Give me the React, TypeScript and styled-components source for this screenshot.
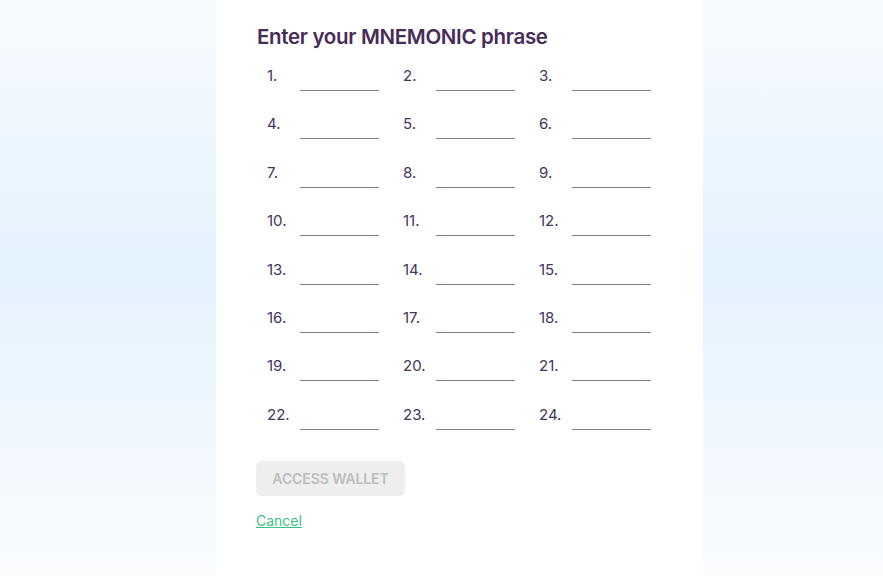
import React from 'react'
import styled, { createGlobalStyle } from 'styled-components'

const GlobalStyle = createGlobalStyle`
  html, body {
    margin: 0;
    padding: 0;
    height: 100%;
  }
  body {
    font-family: Inter, "Noto Sans", sans-serif;
  }
  #root {
    height: 100%;
  }
`

const StyledPage = styled('div')`
  min-height: 576px;
  display: flex;
  justify-content: center;
  background: linear-gradient(180deg, #f7fbfe 0%, #e4f2fe 47%, #fafcfe 100%);
`

const StyledCard = styled('section')`
  width: 487px;
  box-sizing: border-box;
  margin-left: 36px;
  background-color: #ffffff;
  padding: 25px 40px 0 40px;
`

const StyledHeading = styled('h2')`
  margin: 0 0 11px 1px;
  font-size: 20.5px;
  line-height: 24px;
  font-weight: 600;
  letter-spacing: -0.32px;
  color: #472c57;
`

const StyledGrid = styled('div')`
  margin-left: 11px;
  display: grid;
  grid-template-columns: repeat(3, 136px);
  row-gap: 17.4px;
`

const StyledItem = styled('label')`
  display: flex;
  align-items: center;
`

const StyledNumber = styled('span')`
  width: 33px;
  font-size: 15px;
  color: #45345b;
`

const StyledInput = styled('input')`
  width: 79px;
  height: 30px;
  box-sizing: content-box;
  padding: 0;
  border: none;
  border-bottom: 1px solid #877d8c;
  outline: none;
  background: transparent;
  font-family: inherit;
  font-size: 15px;
`

const StyledButton = styled('button')`
  margin-top: 31px;
  width: 149px;
  height: 35px;
  border: none;
  border-radius: 6px;
  background-color: #eeeeee;
  color: #bdbdbd;
  font-family: inherit;
  font-size: 14px;
  font-weight: 600;
  letter-spacing: -0.1px;
  display: block;
`

const StyledCancel = styled('a')`
  display: inline-block;
  margin-top: 16px;
  font-size: 14px;
  line-height: 18px;
  color: #3dbf86;
  text-decoration: underline;
`

const words = Array.from({ length: 24 }, (_, i) => i + 1)

const App = () => {
  return (
    <>
      <GlobalStyle />
      <StyledPage>
        <StyledCard>
          <StyledHeading>Enter your MNEMONIC phrase</StyledHeading>
          <StyledGrid>
            {words.map((n) => (
              <StyledItem key={n}>
                <StyledNumber>{n}.</StyledNumber>
                <StyledInput type="text" />
              </StyledItem>
            ))}
          </StyledGrid>
          <StyledButton disabled>ACCESS WALLET</StyledButton>
          <StyledCancel href="#">Cancel</StyledCancel>
        </StyledCard>
      </StyledPage>
    </>
  )
}

export default App
